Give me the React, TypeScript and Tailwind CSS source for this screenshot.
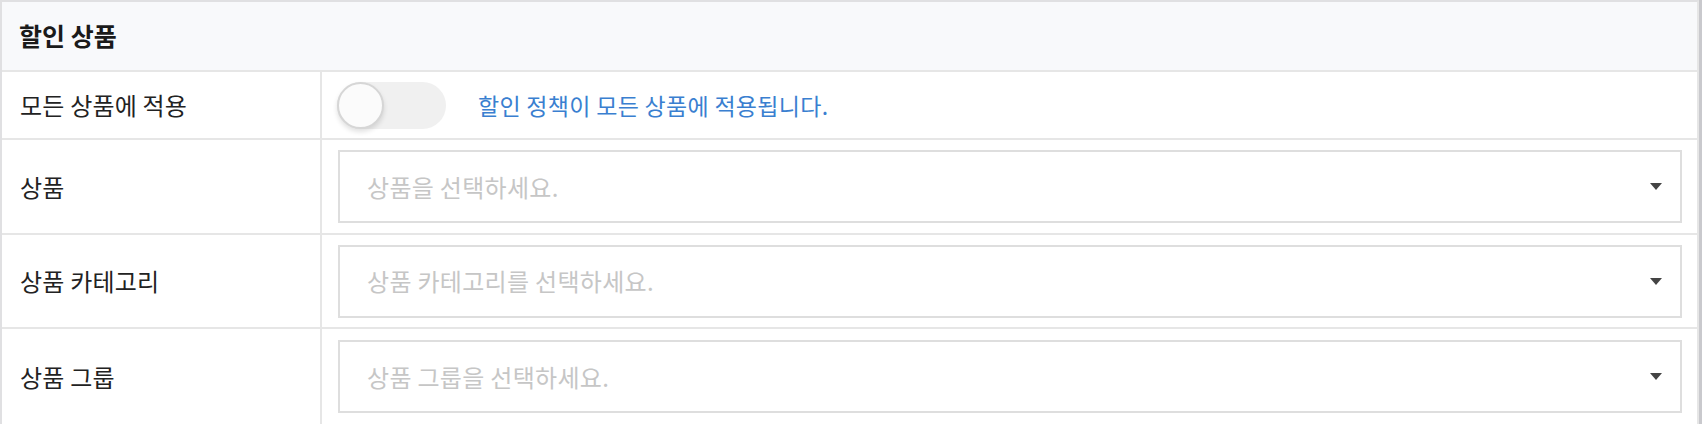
import React from "react";

const FONT = "font-['Noto_Sans_CJK_KR','Noto_Sans',sans-serif]";

interface SelectProps {
  placeholder: string;
}

const SelectBox = ({ placeholder }: SelectProps) => {
  return (
    <div className="flex h-[73px] w-full items-center justify-between border-2 border-[#dedede] bg-white pl-[27px] pr-[18px]">
      <span className="text-[24px] tracking-[0.3px] text-[#c6c6c6]">{placeholder}</span>
      <svg width="12" height="7" viewBox="0 0 12 7" className="shrink-0">
        <path d="M0 0 L12 0 L6 7 Z" fill="#444444" />
      </svg>
    </div>
  );
};

interface RowProps {
  label: string;
  height: string;
  last?: boolean;
  children: React.ReactNode;
}

const FormRow = ({ label, height, last = false, children }: RowProps) => {
  return (
    <div
      className={`flex ${height} ${last ? "" : "border-b-2 border-[#e6e6e6]"}`}
    >
      <div className="flex w-[320px] shrink-0 items-center border-r-2 border-[#e6e6e6] pl-[18px] text-[24px] tracking-[0.2px] text-[#222222]">
        {label}
      </div>
      <div className="flex flex-1 items-center pl-[16px] pr-[15px]">
        {children}
      </div>
    </div>
  );
};

export default function App() {
  return (
    <div
      className={`h-[424px] w-[1702px] overflow-hidden border-r-[3px] border-[#c9c9cd] bg-white ${FONT}`}
    >
      <div className="h-full border-t-2 border-l-2 border-r-2 border-[#e0e0e2] border-r-[#e6e6e6]">
        {/* HEADER */}
        <div className="flex h-[70px] items-center border-b-2 border-[#e6e6e6] bg-[#f8f9fb] pl-[17px] text-[25px] font-bold text-[#1a1a1a]">
          할인 상품
        </div>

        {/* TOGGLE ROW */}
        <FormRow label="모든 상품에 적용" height="h-[68px]">
          <div className="ml-[-1px] flex items-center gap-[32px]">
            <div className="relative h-[47px] w-[109px] rounded-full bg-[#f0f0f0]">
              <div className="absolute left-0 top-0 h-[47px] w-[47px] rounded-full border-2 border-[#d6d6d6] bg-[#fbfbfb] shadow-[0_3px_5px_rgba(0,0,0,0.12)]" />
            </div>
            <span className="text-[23px] tracking-[0.3px] text-[#3a7fd0]">
              할인 정책이 모든 상품에 적용됩니다.
            </span>
          </div>
        </FormRow>

        <FormRow label="상품" height="h-[95px]">
          <SelectBox placeholder="상품을 선택하세요." />
        </FormRow>

        <FormRow label="상품 카테고리" height="h-[94px]">
          <SelectBox placeholder="상품 카테고리를 선택하세요." />
        </FormRow>

        <FormRow label="상품 그룹" height="h-[95px]" last>
          <SelectBox placeholder="상품 그룹을 선택하세요." />
        </FormRow>
      </div>
    </div>
  );
}
